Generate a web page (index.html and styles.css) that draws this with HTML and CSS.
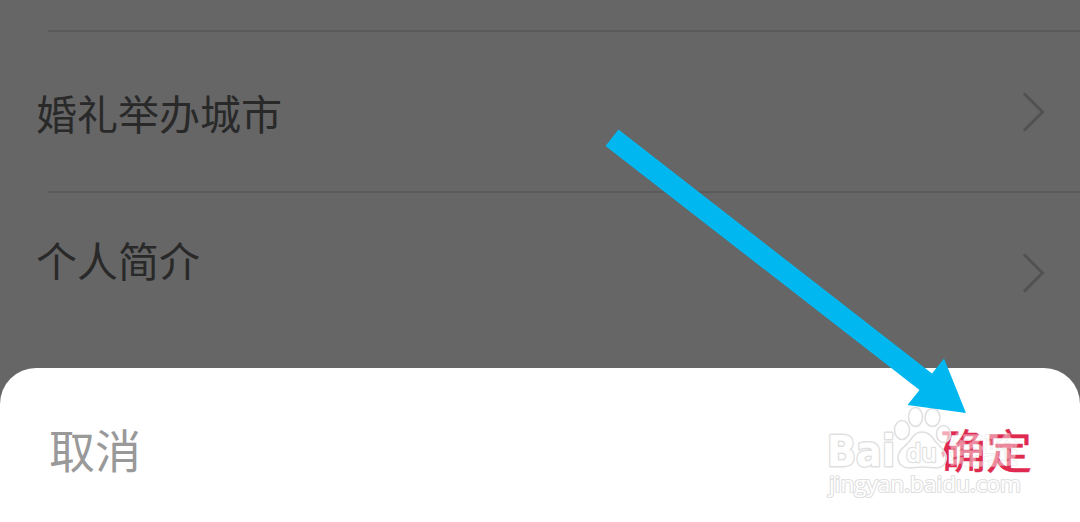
FILE: index.html
```html
<!DOCTYPE html>
<html lang="zh-CN">
<head>
    <meta charset="UTF-8">
    <meta name="viewport" content="width=device-width, initial-scale=1.0">
    <title>个人资料</title>
    <link rel="stylesheet" href="styles.css">
</head>
<body>
    <div class="page">
        <div class="profile-list">
            <div class="profile-item">
                <span class="label">婚礼举办城市</span>
                <svg class="chevron" width="24" height="42" viewBox="0 0 24 42">
                    <path d="M2 2.5 L20.5 21 L2 39.5"/>
                </svg>
            </div>
            <div class="profile-item intro">
                <span class="label">个人简介</span>
                <svg class="chevron" width="24" height="42" viewBox="0 0 24 42">
                    <path d="M2 2.5 L20.5 21 L2 39.5"/>
                </svg>
            </div>
        </div>

        <div class="sheet">
            <span class="cancel">取消</span>
            <span class="confirm">确定</span>
        </div>

        <!-- 水印 -->
        <svg class="watermark" width="210" height="104" viewBox="820 400 210 104">
            <g class="mark">
                <text class="mark-cn" x="950" y="463">经验</text>
                <text class="mark-bai" x="827" y="466" textLength="68" lengthAdjust="spacingAndGlyphs">Bai</text>
                <g class="mark-paw">
                    <ellipse cx="902" cy="430" rx="7.5" ry="9.5"/>
                    <ellipse cx="915.5" cy="417" rx="7" ry="9.5"/>
                    <ellipse cx="932.5" cy="417.5" rx="7.5" ry="9"/>
                    <ellipse cx="943.5" cy="434" rx="7" ry="8.5"/>
                    <path d="M922 432 C914 432 912 439 908 443 C903 448 898 451 898 458 C898 464 903 468 909 468 C914 468 917 467 922 467 C928 467 932 468 937 468 C944 467 947 462 946 456 C945 450 939 446 935 441 C932 436 928 432 922 432 Z"/>
                </g>
                <text class="mark-du" x="906" y="462" textLength="31" lengthAdjust="spacingAndGlyphs">du</text>
                <text class="mark-url" x="829" y="492" textLength="192" lengthAdjust="spacingAndGlyphs">jingyan.baidu.com</text>
            </g>
        </svg>

        <!-- 指向确定按钮的箭头 -->
        <svg class="arrow" width="1080" height="522" viewBox="0 0 1080 522">
            <polygon points="618.5,129.5 932,373.5 944,358.5 966,413 907.5,405 919.5,390 605.5,146"/>
        </svg>
    </div>
</body>
</html>
```

FILE: styles.css
```css
body {
    margin: 0;
    background: #666666;
    font-family: "Noto Sans CJK SC", sans-serif;
}

.page {
    position: relative;
    height: 522px;
    overflow: hidden;
}

.profile-list {
    padding-top: 30px;
}

.profile-item {
    display: flex;
    justify-content: space-between;
    align-items: center;
    height: 161px;
    box-sizing: border-box;
    padding: 3px 34px 0 36px;
    background: linear-gradient(#5a5a5a, #5a5a5a) 48px 0 / 100% 2px no-repeat;
}

.label {
    font-size: 41px;
    line-height: 60px;
    color: #292929;
}

.intro .label {
    padding: 0 0 28px;
}

.chevron {
    fill: none;
    stroke: #525252;
    stroke-width: 3;
}

.sheet {
    position: absolute;
    left: 0;
    right: 0;
    bottom: 0;
    height: 154px;
    box-sizing: border-box;
    padding: 47px 48px 0 49px;
    display: flex;
    justify-content: space-between;
    align-items: flex-start;
    background: #ffffff;
    border-radius: 36px 36px 0 0;
    font-size: 46px;
    line-height: 66px;
}

.cancel {
    color: #999999;
}

.confirm {
    color: #e0294f;
    -webkit-text-stroke: 0.5px #e0294f;
}

.watermark {
    position: absolute;
    left: 820px;
    top: 400px;
}

.mark {
    fill: #ffffff;
    stroke: #e0e0e0;
    stroke-width: 3;
    stroke-linejoin: round;
    paint-order: stroke;
}

.mark-bai {
    font: bold 43px "DejaVu Sans", sans-serif;
}

.mark-paw {
    fill: rgba(255, 255, 255, 0.6);
    stroke-width: 1.6;
    paint-order: normal;
}

.mark-cn {
    font: bold 34px "Noto Sans CJK SC", sans-serif;
    stroke-width: 2;
    opacity: 0.45;
}

.mark-du {
    font: 600 26px "Open Sans", sans-serif;
    stroke-width: 2.4;
}

.mark-url {
    font: 22px "Open Sans", sans-serif;
    stroke-width: 2.2;
}

.arrow {
    position: absolute;
    left: 0;
    top: 0;
    fill: #00b7ef;
}
```
